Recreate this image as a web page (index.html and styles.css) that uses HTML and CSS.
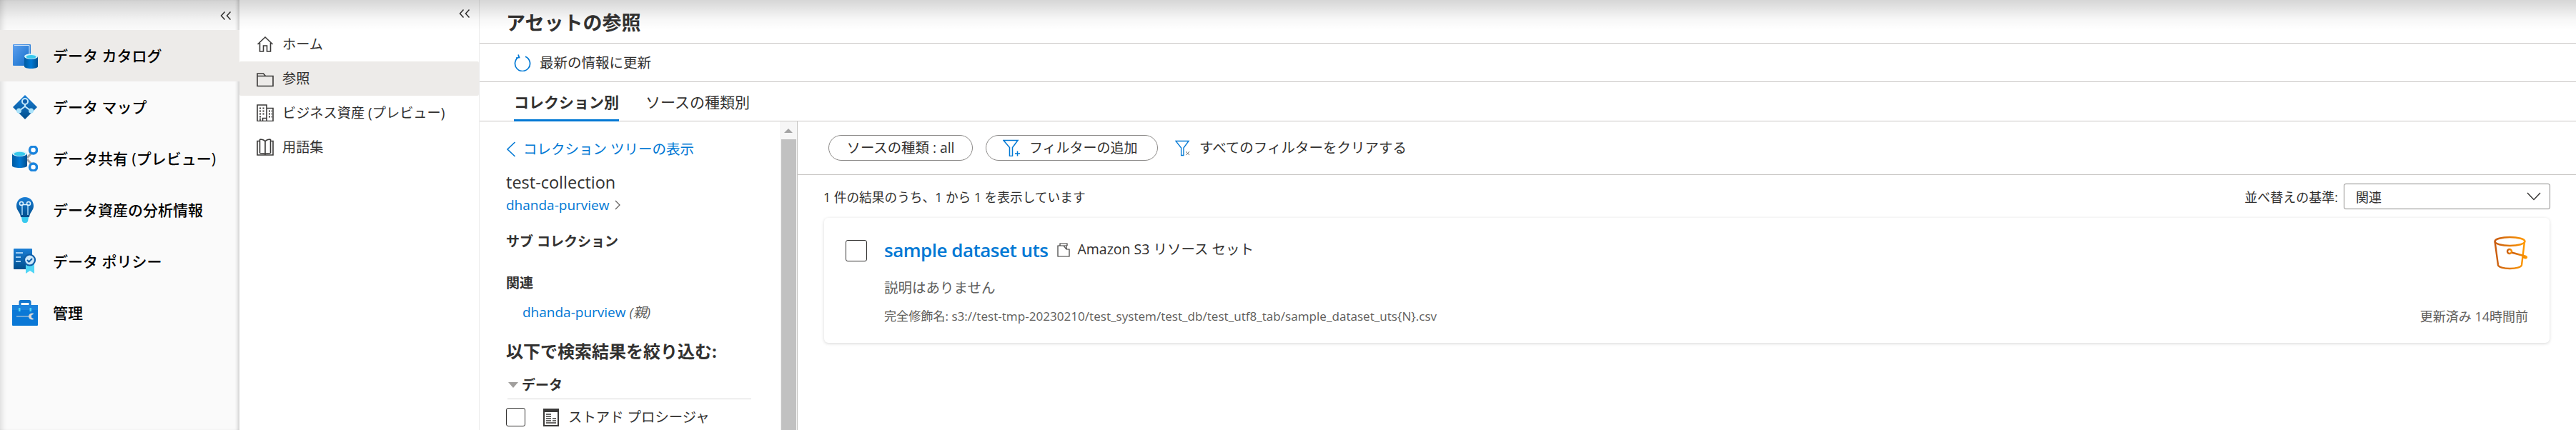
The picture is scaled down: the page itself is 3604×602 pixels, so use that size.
FILE: index.html
```html
<!DOCTYPE html>
<html lang="ja">
<head>
<meta charset="utf-8">
<title>アセットの参照</title>
<link rel="stylesheet" href="styles.css">
</head>
<body>
<div class="app">
  <div class="top-shade"></div>
  <nav class="nav-main">
    <div class="nav-main-head">
      <svg class="collapse" viewBox="0 0 16 12"><path d="M6.5 .5 1.5 6l5 5.5M14.500 .5 9.500 6l5 5.500"/></svg>
    </div>
    <a class="nav-main-item is-active">
      <svg class="nav-main-icon" viewBox="0 0 36 36">
        <defs>
          <linearGradient id="gb" x1="0" y1="0" x2="1" y2="1"><stop offset="0" stop-color="#5ea0ef"/><stop offset="1" stop-color="#0f6cc8"/></linearGradient>
          <linearGradient id="gc" x1="0" y1="0" x2="1" y2="0"><stop offset="0" stop-color="#005ba1"/><stop offset=".5" stop-color="#0078d4"/><stop offset="1" stop-color="#004f8f"/></linearGradient>
          <linearGradient id="gm" x1="0" y1="0" x2="0" y2="1"><stop offset="0" stop-color="#1b7fd6"/><stop offset="1" stop-color="#004e8c"/></linearGradient>
        </defs>
        <rect x="1" y="2" width="25" height="30" rx="1" fill="url(#gb)"/>
        <path d="M3 3.500h21v25" fill="none" stroke="#cfe4f8" stroke-width="1"/>
        <path d="M17 19v14c0 2 4 3 9.500 3s9.500-1 9.500-3V19z" fill="url(#gc)"/>
        <ellipse cx="26.500" cy="19" rx="9.500" ry="3.800" fill="#d8f3fb"/>
        <ellipse cx="26.500" cy="19.500" rx="7" ry="2.500" fill="#38c9ec"/>
      </svg>
      <span>データ カタログ</span>
    </a>
    <a class="nav-main-item">
      <svg class="nav-main-icon" viewBox="0 0 36 36">
        <path d="M18 1 35 18 18 35 1 18z" fill="url(#gm)"/>
        <path d="M18 11v6M18 17 10 23M18 17l8 6" fill="none" stroke="#c5e9fb" stroke-width="2"/>
        <circle cx="18" cy="10" r="4" fill="#1161ad" stroke="#c5e9fb" stroke-width="2"/>
        <circle cx="9.500" cy="23" r="3.500" fill="#a9e2fa"/>
        <circle cx="26.500" cy="23" r="3.500" fill="#a9e2fa"/>
      </svg>
      <span>データ マップ</span>
    </a>
    <a class="nav-main-item">
      <svg class="nav-main-icon" viewBox="0 0 36 36">
        <path d="M21 17 29 8M21 19l9 10" fill="none" stroke="#a6a6a6" stroke-width="3"/>
        <path d="M0 11v17c0 2 4.500 3 10.500 3S21 30 21 28V11z" fill="url(#gc)"/>
        <ellipse cx="10.500" cy="11" rx="10.500" ry="4" fill="#d8f3fb"/>
        <ellipse cx="10.500" cy="11.500" rx="8" ry="2.800" fill="#38c9ec"/>
        <circle cx="29.500" cy="6" r="5" fill="#fff" stroke="#1b84dd" stroke-width="3.500"/>
        <circle cx="29.500" cy="30" r="5" fill="#fff" stroke="#1b84dd" stroke-width="3.500"/>
      </svg>
      <span>データ共有 (プレビュー)</span>
    </a>
    <a class="nav-main-item">
      <svg class="nav-main-icon" viewBox="0 0 36 36">
        <path d="M18 0C11 0 6 5.500 6 12c0 5.500 3.500 8 5 12 .5 1.500 1 3 1 4h12c0-1 .5-2.500 1-4 1.500-4 5-6.500 5-12C30 5.500 25 0 18 0z" fill="url(#gm)"/>
        <path d="M13 28h10l-1 6-2 2h-4l-2-2z" fill="#39c9ee"/>
        <path d="M14 10v15M22 10v15" stroke="#9fd3f5" stroke-width="1.600" fill="none"/>
        <circle cx="13" cy="9" r="2.500" fill="none" stroke="#dff2fd" stroke-width="1.500"/>
        <circle cx="23" cy="9" r="2.500" fill="none" stroke="#dff2fd" stroke-width="1.500"/>
        <path d="M15 10.500h6" stroke="#dff2fd" stroke-width="1.500"/>
      </svg>
      <span>データ資産の分析情報</span>
    </a>
    <a class="nav-main-item">
      <svg class="nav-main-icon" viewBox="0 0 36 36">
        <rect x="2" y="0" width="26" height="29" rx="1" fill="url(#gm)"/>
        <path d="M19 22h12v13l-6-4-6 4z" fill="#50d6f5"/>
        <path d="M5 6h10M5 12h7M5 18h7" stroke="#9fcdf2" stroke-width="2"/>
        <circle cx="24.500" cy="16" r="7.500" fill="#cde8fa" stroke="#0f5ea8" stroke-width="2.200"/>
        <path d="M21 16l2.500 2.500 4.500-4.500" fill="none" stroke="#0f5ea8" stroke-width="2"/>
      </svg>
      <span>データ ポリシー</span>
    </a>
    <a class="nav-main-item">
      <svg class="nav-main-icon" viewBox="0 0 36 36">
        <path d="M9.500 10V2.500C9.500 1 10.500 0 12 0h12c1.500 0 2.500 1 2.500 2.500V10h-3V4h-11v6z" fill="#1377cf"/>
        <rect x="0" y="7" width="36" height="29" rx="1" fill="#0a78d6"/>
        <rect x="0" y="7" width="36" height="7" fill="#1c83dc"/>
        <path d="M9 11h2.500v5H9zM24.500 11H27v5h-2.500z" fill="#50d6f5"/>
        <path d="M6 22.500h17c.5-2.500 2.500-4 5-4 1 0 2 .3 2.500.7L27 21.500v3l3.500 2.300c-.5.400-1.500.7-2.500.7-2.500 0-4.500-1.500-5-4H6z" fill="#d6d6d6"/>
      </svg>
      <span>管理</span>
    </a>
  </nav>

  <nav class="nav-sub">
    <div class="nav-sub-head">
      <svg class="collapse" viewBox="0 0 16 12"><path d="M6.500 .5 1.500 6l5 5.500M14.500 .5 9.500 6l5 5.500"/></svg>
    </div>
    <a class="nav-sub-item">
      <svg class="nav-sub-icon" viewBox="0 0 24 24"><path d="M1.500 12 12 2l10.500 10M4.500 10v12H9.500v-8h5v8h5V10"/></svg>
      <span>ホーム</span>
    </a>
    <a class="nav-sub-item is-active">
      <svg class="nav-sub-icon" viewBox="0 0 24 24"><path d="M1 5h8.500l3 3.500H23V22.500H1zM1 8.500h11.500"/></svg>
      <span>参照</span>
    </a>
    <a class="nav-sub-item">
      <svg class="nav-sub-icon" viewBox="0 0 24 24"><path d="M1 1h13v4.500h9v18H1zM14 5.500V23.500M8.500 23.500v-4h5.500M5 23.500v-4"/><path class="dots" d="M4 5.500h2M8.500 5.500h2M4 9.500h2M8.500 9.500h2M4 13.500h2M8.500 13.500h2M4 17.500h2M17 9.500h2M20.500 9.500h1M17 13.500h2M20.500 13.500h1M17 17.500h2M20.500 17.500h1"/></svg>
      <span>ビジネス資産 (プレビュー)</span>
    </a>
    <a class="nav-sub-item">
      <svg class="nav-sub-icon" viewBox="0 0 24 24"><path d="M4.500 1v19.500M19.500 1v19.500M4.500 1c3.500 0 6 1 7.500 3 1.500-2 4-3 7.500-3M12 4v17.500M4.500 20.500c3.500 0 6 0 7.500 1 1.500-1 4-1 7.500-1M4.500 3.500H1v19.500h22V3.500h-3.500"/></svg>
      <span>用語集</span>
    </a>
  </nav>

  <main class="main">
    <header class="page-head"><h1>アセットの参照</h1></header>
    <div class="commands">
      <svg class="refresh" viewBox="0 0 24 24"><path d="M7 3.800A10.500 10.500 0 1 0 16 3.300M6 .5l1.500 4L3 5"/></svg>
      <span>最新の情報に更新</span>
    </div>
    <div class="tabs">
      <a class="tab is-active">コレクション別</a>
      <a class="tab">ソースの種類別</a>
    </div>
    <div class="browse">
      <aside class="side">
        <div class="side-content">
          <a class="back"><svg class="back-icon" viewBox="0 0 14 22"><path d="M12.500 1 2 11l10.500 10"/></svg>コレクション ツリーの表示</a>
          <div class="coll-name">test-collection</div>
          <a class="coll-link">dhanda-purview <svg class="crumb" viewBox="0 0 8 14"><path d="M1 1l6 6-6 6"/></svg></a>
          <div class="side-label label-sub">サブ コレクション</div>
          <div class="side-label label-rel">関連</div>
          <div class="rel-item"><a>dhanda-purview</a> <em>(親)</em></div>
          <h2 class="narrow">以下で検索結果を絞り込む:</h2>
          <div class="group"><i class="tri"></i>データ</div>
          <label class="facet">
            <i class="box"></i>
            <svg class="facet-icon" viewBox="0 0 22 25"><rect width="22" height="25" fill="#3b3a39"/><rect x="2" y="5" width="18" height="18" fill="#fff"/><path d="M4 8h7M4 11h7M4 14h7M13 14h5M4 17h7M13 17h5M4 20h14" stroke="#3b3a39" stroke-width="1.500"/></svg>
            <span>ストアド プロシージャ</span>
          </label>
        </div>
        <div class="scrollbar"><i class="scroll-up"></i><div class="scroll-thumb"></div></div>
      </aside>
      <section class="results">
        <div class="filters">
          <button class="pill pill-source">ソースの種類 : <b>all</b></button>
          <button class="pill pill-add"><svg class="filter-icon" viewBox="0 0 24 24"><path d="M1 1.500h20L13.500 11.500v12h-4v-12zM17 20h7M20.500 16.500v7"/></svg><span>フィルターの追加</span></button>
          <a class="clear">
            <svg class="clear-icon" viewBox="0 0 22 24"><path d="M1 1.500h19L12.500 11.500v11h-3.500v-11z"/><path class="x" d="M16 17l5 5M21 17l-5 5"/></svg>
            <span>すべてのフィルターをクリアする</span>
          </a>
        </div>
        <div class="result-head">
          <span class="count">1 件の結果のうち、1 から 1 を表示しています</span>
          <div class="sort">
            <span>並べ替えの基準:</span>
            <div class="select"><span>関連</span><svg class="select-arrow" viewBox="0 0 20 12"><path d="M1 1l9 9.500L19 1"/></svg></div>
          </div>
        </div>
        <article class="card">
          <i class="box box-card"></i>
          <div class="card-body">
            <div class="card-top">
              <a class="card-title">sample dataset uts</a>
              <svg class="type-icon" viewBox="0 0 18 20"><path d="M4 4V1h10v3M1 4h12v5h4v10H1zM13 9 9 4"/></svg>
              <span class="card-type">Amazon S3 リソース セット</span>
              <svg class="bucket" viewBox="0 0 48 48">
                <defs><linearGradient id="go" x1="0" y1="0" x2="1" y2="0"><stop offset="0" stop-color="#c85b10"/><stop offset="1" stop-color="#ff9900"/></linearGradient></defs>
                <g fill="none" stroke="url(#go)" stroke-width="2.400">
                  <ellipse cx="22.500" cy="8" rx="21" ry="6"/>
                  <path d="M1.500 8 6 41c.5 3 8 5 16.500 5S38.500 44 39 41l4-33"/>
                  <circle cx="22" cy="22" r="3"/>
                  <path d="M25 23.500 45 29c2 1 .5 3-2 2L41 30"/>
                </g>
              </svg>
            </div>
            <p class="card-desc">説明はありません</p>
            <div class="card-foot">
              <span class="fqn">完全修飾名: s3://test-tmp-20230210/test_system/test_db/test_utf8_tab/sample_dataset_uts{N}.csv</span>
              <span class="updated">更新済み 14時間前</span>
            </div>
          </div>
        </article>
      </section>
    </div>
  </main>
</div>
</body>
</html>
```
FILE: styles.css
```css
* { box-sizing: border-box; }
html, body { margin: 0; height: 100%; overflow: hidden; background: #fff; }
body {
  font-family: "Open Sans", "Noto Sans CJK JP", "Noto Sans", sans-serif;
  color: #323130;
}
a { display: block; }
svg { display: block; flex: none; }
h1, h2, p { margin: 0; font: inherit; }

.app { display: flex; width: 3604px; height: 602px; position: relative; overflow: hidden; }
.top-shade {
  position: absolute; left: 0; right: 0; top: 0; height: 42px; z-index: 5; pointer-events: none;
  background: linear-gradient(rgba(0,0,0,.16), rgba(0,0,0,.03) 65%, rgba(0,0,0,0));
}
.collapse { width: 16px; height: 12px; fill: none; stroke: #323130; stroke-width: 1.500; }

.nav-main {
  width: 335px; flex: none; background: #fafafa;
  box-shadow: inset 8px 0 8px -6px rgba(0,0,0,.14), inset -5px 0 5px -3px rgba(0,0,0,.2);
}
.nav-main-head { height: 42px; padding: 16px 11px 0 0; display: flex; justify-content: flex-end; }
.nav-main-item {
  height: 72px; padding-left: 17px; display: flex; align-items: center; gap: 21px;
  font-size: 21px; font-weight: 500; color: #000; line-height: 28px; white-space: nowrap;
}
.nav-main-item.is-active { background: #edebe9; }
.nav-main-icon { width: 36px; height: 36px; }

.nav-sub { width: 336px; flex: none; border-right: 1px solid #ebebeb; background: #fff; }
.nav-sub-head { height: 38px; padding: 13px 12px 0 0; display: flex; justify-content: flex-end; }
.nav-sub-item {
  height: 48px; padding-left: 24px; display: flex; align-items: center; gap: 12px;
  font-size: 19.200px; line-height: 26px; white-space: nowrap; color: #323130;
}
.nav-sub-item.is-active { background: #edebe9; border-radius: 2px; }
.nav-sub-icon { width: 24px; height: 24px; fill: none; stroke: #3b3a39; stroke-width: 1.600; }
.nav-sub-icon .dots { stroke-width: 2; stroke-dasharray: 2 1; }

.main { flex: 1; min-width: 0; display: flex; flex-direction: column; }
.page-head { height: 61px; padding: 14px 0 0 37px; border-bottom: 1px solid #c8c6c4; flex: none; }
.page-head h1 { font-size: 27px; line-height: 36px; font-weight: 700; }
.commands {
  height: 54px; flex: none; padding-left: 48px; display: flex; align-items: center; gap: 12px;
  border-bottom: 1px solid #c8c6c4; font-size: 19.500px; line-height: 26px;
}
.refresh { width: 24px; height: 24px; fill: none; stroke: #0078d4; stroke-width: 1.700; }
.tabs {
  height: 55px; flex: none; padding-left: 48px; display: flex; gap: 37px;
  border-bottom: 1px solid #c8c6c4;
}
.tab { height: 55px; padding-top: 14px; font-size: 21px; line-height: 28px; }
.tab.is-active { font-weight: 700; border-bottom: 3px solid #0078d4; }

.browse { flex: 1; min-height: 0; display: flex; }
.side { width: 445px; flex: none; display: flex; border-right: 1px solid #c8c6c4; overflow: hidden; }
.side-content { flex: 1; min-width: 0; padding: 26px 0 0 37px; }
.back { display: flex; align-items: center; gap: 10px; color: #0078d4; font-size: 19.500px; line-height: 26px; }
.back-icon { width: 14px; height: 22px; fill: none; stroke: #0078d4; stroke-width: 1.600; }
.coll-name { margin-top: 17px; font-size: 23.500px; line-height: 32px; font-weight: 500; }
.coll-link { margin-top: 3px; color: #0078d4; font-size: 19px; line-height: 26px; display: flex; align-items: center; gap: 7px; }
.crumb { width: 8px; height: 14px; fill: none; stroke: #605e5c; stroke-width: 1.200; }
.side-label { font-size: 19px; line-height: 26px; font-weight: 700; }
.label-sub { margin-top: 25px; }
.label-rel { margin-top: 32px; }
.rel-item { margin-top: 15px; padding-left: 23px; font-size: 19px; line-height: 26px; }
.rel-item a { display: inline; color: #0078d4; }
.rel-item em { color: #605e5c; }
.narrow { margin-top: 26px; font-size: 24px; line-height: 32px; font-weight: 700; }
.group {
  margin: 18px 0 0 2px; width: 341px; height: 33px; padding-left: 20px; position: relative;
  display: flex; align-items: flex-start; font-size: 19px; line-height: 26px; font-weight: 700;
  border-bottom: 1px solid #d6d6d6;
}
.tri {
  position: absolute; left: 1px; top: 9px; width: 0; height: 0;
  border-left: 7px solid transparent; border-right: 7px solid transparent; border-top: 8px solid #a19f9d;
}
.facet { margin-top: 12px; display: flex; align-items: center; font-size: 19.400px; line-height: 26px; }
.box { display: block; flex: none; width: 27px; height: 26px; border: 1px solid #323130; border-radius: 3px; background: #fff; }
.facet-icon { width: 22px; height: 25px; margin: 0 13px 0 25px; }

.scrollbar { width: 24px; flex: none; background: #f6f6f6; padding: 1px 1px 0 1px; display: flex; flex-direction: column; align-items: center; }
.scroll-up {
  display: block; width: 0; height: 0; margin-top: 9px;
  border-left: 6px solid transparent; border-right: 6px solid transparent; border-bottom: 6px solid #a3a3a3;
}
.scroll-thumb { margin-top: 9px; width: 21px; flex: 1; background: #c1c1c1; }

.results { flex: 1; min-width: 0; }
.filters {
  height: 75px; padding-left: 43px; display: flex; align-items: center;
  border-bottom: 1px solid #c8c6c4;
}
.pill {
  font: inherit; color: #323130; background: #fff; height: 36px; border: 1px solid #8a8886; border-radius: 18px;
  font-size: 19px; line-height: 26px; display: flex; align-items: center; white-space: nowrap; padding: 0;
}
.pill b { font-weight: 500; margin-left: .25em; }
.pill-source { width: 202px; justify-content: center; font-size: 19.400px; }
.pill-add { width: 241px; margin-left: 18px; gap: 13px; padding-left: 23px; }
.filter-icon { width: 24px; height: 24px; fill: none; stroke: #0078d4; stroke-width: 1.500; }
.clear { display: flex; align-items: center; gap: 13px; margin-left: 24px; font-size: 19.500px; line-height: 26px; white-space: nowrap; }
.clear-icon { width: 21px; height: 23px; fill: none; stroke: #0078d4; stroke-width: 1.400; }
.clear-icon .x { stroke: #605e5c; stroke-width: 1; }

.result-head { height: 48px; padding: 12px 36px 0 36px; display: flex; justify-content: space-between; align-items: center; font-size: 17px; }
.count { font-size: 17.700px; }
.sort { display: flex; align-items: center; gap: 8px; font-size: 18px; }
.select {
  width: 289px; height: 36px; padding: 0 12px 0 16px; display: flex; align-items: center; justify-content: space-between;
  border: 1px solid #8a8886; border-radius: 3px;
}
.select-arrow { width: 20px; height: 12px; fill: none; stroke: #323130; stroke-width: 1.400; }

.card {
  margin: 12px 0 0 37px; width: 2414px; height: 175px; padding: 25px 30px 0; display: flex;
  border-radius: 6px; background: #fff; box-shadow: 0 1px 4px rgba(0,0,0,.16);
}
.box-card { width: 30px; height: 30px; margin: 6px 24px 0 0; }
.card-body { flex: 1; min-width: 0; }
.card-top { display: flex; align-items: flex-start; }
.card-title { color: #0078d4; font-size: 26px; letter-spacing: -.5px; line-height: 40px; font-weight: 600; white-space: nowrap; }
.type-icon { width: 18px; height: 20px; margin: 10px 10px 0 13px; fill: none; stroke: #3b3a39; stroke-width: 1.200; }
.card-type { font-size: 19.500px; line-height: 38px; white-space: nowrap; }
.bucket { width: 48px; height: 48px; margin-left: auto; }
.card-desc { margin-top: 12px; font-size: 19.500px; line-height: 26px; color: #605e5c; }
.card-foot { margin-top: 15px; display: flex; justify-content: space-between; line-height: 24px; color: #605e5c; white-space: nowrap; }
.fqn { font-size: 17.100px; }
.updated { font-size: 18px; }
```
